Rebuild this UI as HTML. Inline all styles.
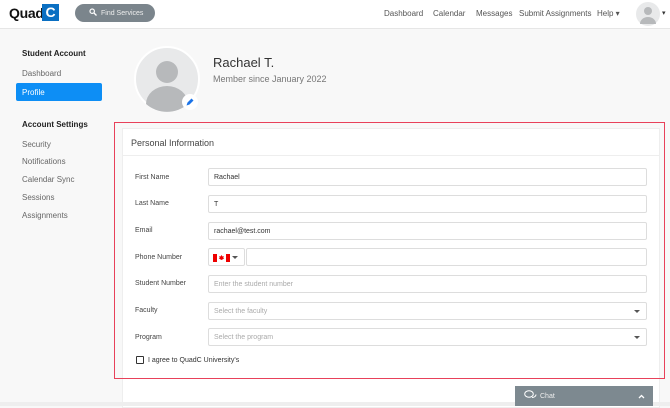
<!DOCTYPE html>
<html><head><style>
*{box-sizing:border-box;margin:0;padding:0}
body{width:670px;height:406px;overflow:hidden;background:#f8f8f8;font-family:"Liberation Sans",sans-serif;position:relative;color:#333}
.a{position:absolute}
.top{left:0;top:0;width:670px;height:29px;background:#fff;border-bottom:1px solid #e6e6e6}
.nav{font-size:8px;color:#555;top:9px}
.side{font-size:8px;color:#666;left:22px}
.lbl{font-size:7px;color:#444;left:135px}
.inp{left:208px;width:439px;height:18px;background:#fff;border:1px solid #ddd;border-radius:2px;font-size:7px;color:#333;padding:0 5px;display:flex;align-items:center}
.ph{color:#aaa}
.caret{position:absolute;right:6px;top:7px;width:0;height:0;border-left:3px solid transparent;border-right:3px solid transparent;border-top:3px solid #555}
.fx{display:flex;align-items:center}
</style></head><body>
<div class="a top"></div>
<div class="a" style="left:9px;top:5px;font-size:14px;font-weight:bold;color:#111;letter-spacing:-0.3px">Quad</div>
<div class="a" style="left:42px;top:4px;width:17px;height:17px;background:#0a6fc2;color:#fff;font-size:14px;font-weight:bold;text-align:center;line-height:17px">C</div>
<div class="a fx" style="left:75px;top:4px;width:80px;height:18px;border-radius:9px;background:#7b858c;color:#eee;font-size:7px;padding-left:26px">Find Services</div>
<svg class="a" style="left:89px;top:8px" width="8" height="8" viewBox="0 0 8 8"><circle cx="3.2" cy="3.2" r="2.2" stroke="#fff" stroke-width="1.2" fill="none"/><path d="M5 5L7.5 7.5" stroke="#fff" stroke-width="1.3"/></svg>
<div class="a nav" style="left:384px">Dashboard</div>
<div class="a nav" style="left:433px">Calendar</div>
<div class="a nav" style="left:476px">Messages</div>
<div class="a nav" style="left:519px">Submit Assignments</div>
<div class="a nav" style="left:597px">Help ▾</div>
<svg class="a" style="left:636px;top:2px" width="24" height="24" viewBox="0 0 24 24"><circle cx="12" cy="12" r="12" fill="#e8e9ea"/><circle cx="12" cy="9" r="4" fill="#b7b9bb"/><path d="M4 22a8 7 0 0 1 16 0z" fill="#b7b9bb"/></svg>
<div class="a" style="left:662px;top:9px;font-size:7px">▾</div>

<div class="a" style="left:22px;top:49px;font-size:8px;font-weight:bold;color:#222">Student Account</div>
<div class="a side" style="top:69px">Dashboard</div>
<div class="a fx" style="left:16px;top:83px;width:86px;height:18px;background:#0d8ef5;border-radius:2px;color:#fff;font-size:8px;padding-left:6px">Profile</div>
<div class="a" style="left:22px;top:120px;font-size:8px;font-weight:bold;color:#222">Account Settings</div>
<div class="a side" style="top:140px">Security</div>
<div class="a side" style="top:157px">Notifications</div>
<div class="a side" style="top:175px">Calendar Sync</div>
<div class="a side" style="top:193px">Sessions</div>
<div class="a side" style="top:211px">Assignments</div>

<svg class="a" style="left:134px;top:46px" width="66" height="66" viewBox="0 0 66 66"><circle cx="33" cy="33" r="32" fill="#e8e9ea" stroke="#fff" stroke-width="2"/><circle cx="33" cy="26" r="11" fill="#b7b9bb"/><path d="M12 58a21 18 0 0 1 42 0a32 32 0 0 1-42 0z" fill="#b7b9bb"/><circle cx="56" cy="56" r="8" fill="#fff"/><path d="M52.5 59.5l1-3 4-4 2 2-4 4z" fill="#1a73e8"/></svg>
<div class="a" style="left:213px;top:55px;font-size:13px;color:#333">Rachael T.</div>
<div class="a" style="left:213px;top:74px;font-size:9px;color:#777">Member since January 2022</div>

<div class="a" style="left:122px;top:128px;width:538px;height:280px;background:#fff;border:1px solid #eee"></div>
<div class="a" style="left:122px;top:155px;width:538px;height:1px;background:#eee"></div>
<div class="a" style="left:114px;top:122px;width:551px;height:257px;border:1px solid #e8415a"></div>
<div class="a" style="left:131px;top:138px;font-size:9px;color:#444">Personal Information</div>

<div class="a lbl" style="top:174px">First Name</div><div class="a inp" style="top:168px">Rachael</div>
<div class="a lbl" style="top:200px">Last Name</div><div class="a inp" style="top:195px">T</div>
<div class="a lbl" style="top:227px">Email</div><div class="a inp" style="top:222px">rachael@test.com</div>
<div class="a lbl" style="top:254px">Phone Number</div>
<div class="a inp" style="top:248px;width:37px;padding:0"><svg style="position:absolute;left:4px;top:5px" width="17" height="8"><rect width="4" height="8" fill="#e00"/><rect x="13" width="4" height="8" fill="#e00"/><rect x="4" width="9" height="8" fill="#fff"/><path d="M8.5 1l1 1.5 1.3-.5-.5 2 .9.5-2.7 1.5-2.7-1.5.9-.5-.5-2 1.3.5z" fill="#e00"/></svg><span class="caret"></span></div>
<div class="a inp" style="top:248px;left:246px;width:401px"></div>
<div class="a lbl" style="top:280px">Student Number</div><div class="a inp ph" style="top:275px">Enter the student number</div>
<div class="a lbl" style="top:307px">Faculty</div><div class="a inp ph" style="top:302px">Select the faculty<span class="caret"></span></div>
<div class="a lbl" style="top:334px">Program</div><div class="a inp ph" style="top:328px">Select the program<span class="caret"></span></div>
<div class="a" style="left:136px;top:356px;width:8px;height:8px;border:1px solid #333;border-radius:1px"></div>
<div class="a" style="left:148px;top:357px;font-size:7px;color:#333">I agree to QuadC University's</div>

<div class="a" style="left:0;top:402px;width:670px;height:4px;background:#eee"></div>
<div class="a fx" style="left:515px;top:386px;width:138px;height:20px;background:#7d8990;color:#eee;font-size:7px;padding-left:25px">Chat</div>
<svg class="a" style="left:524px;top:390px" width="13" height="11" viewBox="0 0 13 11"><ellipse cx="5" cy="4" rx="4.3" ry="3.3" fill="none" stroke="#fff"/><path d="M8 7.5a4 3 0 0 0 4-3" fill="none" stroke="#fff"/></svg>
<svg class="a" style="left:638px;top:394px" width="7" height="5"><path d="M1 4L3.5 1.5 6 4" stroke="#fff" stroke-width="1.3" fill="none"/></svg>
</body></html>
